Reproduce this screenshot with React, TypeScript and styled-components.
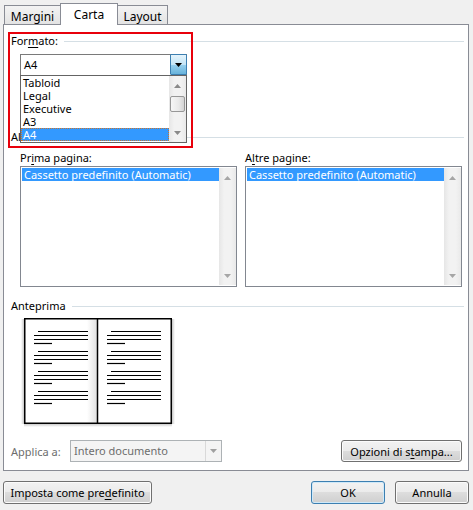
import React from 'react'
import styled, { createGlobalStyle } from 'styled-components'

const GlobalStyle = createGlobalStyle`
  html, body {
    margin: 0;
    padding: 0;
    background: #f0f0f0;
  }
  body {
    font-family: 'Segoe UI', 'Noto Sans', sans-serif;
    font-size: 11px;
    color: #000;
  }
`

const ArrowUp: React.FC<{ color?: string }> = ({ color = '#a6a6a6' }) => (
  <svg width="7" height="4" viewBox="0 0 7 4">
    <path d="M0 4 L3.5 0 L7 4 Z" fill={color} />
  </svg>
)

const ArrowDown: React.FC<{ color?: string }> = ({ color = '#a6a6a6' }) => (
  <svg width="7" height="4" viewBox="0 0 7 4">
    <path d="M0 0 L7 0 L3.5 4 Z" fill={color} />
  </svg>
)

const BookPreview: React.FC = () => {
  const paragraphs = [13, 33, 53, 73]
  const page = (x: number) =>
    paragraphs.map((y) => (
      <g key={`${x}-${y}`} stroke="#000" strokeWidth="1.2">
        <line x1={x + 14} y1={y + 0.5} x2={x + 64} y2={y + 0.5} />
        <line x1={x + 10} y1={y + 4.5} x2={x + 64} y2={y + 4.5} />
        <line x1={x + 10} y1={y + 8.5} x2={x + 64} y2={y + 8.5} />
        <line x1={x + 10} y1={y + 12.5} x2={x + 28} y2={y + 12.5} />
      </g>
    ))

  return (
    <svg width="154" height="110" viewBox="0 0 154 110">
      <defs>
        <linearGradient id="shL" x1="1" x2="0" y1="0" y2="0">
          <stop offset="0" stopColor="#000" stopOpacity="0.22" />
          <stop offset="1" stopColor="#000" stopOpacity="0" />
        </linearGradient>
        <linearGradient id="shR" x1="0" x2="1" y1="0" y2="0">
          <stop offset="0" stopColor="#000" stopOpacity="0.22" />
          <stop offset="1" stopColor="#000" stopOpacity="0" />
        </linearGradient>
        <linearGradient id="shB" x1="0" x2="0" y1="0" y2="1">
          <stop offset="0" stopColor="#000" stopOpacity="0.2" />
          <stop offset="1" stopColor="#000" stopOpacity="0" />
        </linearGradient>
        <linearGradient id="spine" x1="0" x2="1" y1="0" y2="0">
          <stop offset="0" stopColor="#000" stopOpacity="0" />
          <stop offset="1" stopColor="#000" stopOpacity="0.12" />
        </linearGradient>
      </defs>
      <rect x="0" y="1" width="3" height="105" fill="url(#shL)" />
      <rect x="151" y="1" width="3" height="105" fill="url(#shR)" />
      <rect x="3" y="106" width="148" height="3" fill="url(#shB)" />
      <rect x="3.75" y="0.75" width="146.5" height="104.5" fill="#fff" stroke="#000" strokeWidth="1.5" />
      <rect x="66" y="1.5" width="10" height="103" fill="url(#spine)" />
      <line x1="76.5" y1="0" x2="76.5" y2="106" stroke="#000" strokeWidth="1.5" />
      {page(3)}
      {page(76)}
    </svg>
  )
}

const Dialog = styled.div`
  width: 473px;
  height: 510px;
  box-sizing: border-box;
  padding: 3px 4px 0 3px;
  display: flex;
  flex-direction: column;
`

const TabStrip = styled.div`
  position: relative;
  z-index: 2;
  display: flex;
  align-items: flex-end;
  height: 21px;
  padding-left: 2px;
`

const Tab = styled.div<{ $active?: boolean; $w: number }>`
  width: ${(p) => p.$w}px;
  height: ${(p) => (p.$active ? 22 : 19)}px;
  margin-bottom: ${(p) => (p.$active ? -1 : 0)}px;
  margin-left: -1px;
  box-sizing: border-box;
  border: 1px solid #898c95;
  border-bottom: none;
  background: ${(p) => (p.$active ? '#fff' : 'linear-gradient(#f3f3f3, #e3e3e3)')};
  position: relative;
  z-index: ${(p) => (p.$active ? 2 : 1)};
  display: flex;
  align-items: center;
  justify-content: center;
  padding-top: ${(p) => (p.$active ? 0 : 2)}px;
  font-size: 12px;
  line-height: 15px;
`

const Panel = styled.div`
  position: relative;
  height: 447px;
  box-sizing: border-box;
  border: 1px solid #898c95;
  background: #fff;
  padding: 9px 4px 0 7px;
  display: flex;
  flex-direction: column;
`

const GroupHeader = styled.div<{ $top?: number }>`
  display: flex;
  align-items: center;
  height: 14px;
  line-height: 14px;
  margin-top: ${(p) => p.$top ?? 0}px;
  white-space: nowrap;
`

const Rule = styled.div`
  flex: 1;
  height: 1px;
  background: #d5dfe5;
  margin-left: 6px;
`

const Key = styled.span`
  text-decoration: underline;
  text-underline-offset: 2px;
`

const Combo = styled.div<{ $w: number; $disabled?: boolean }>`
  position: relative;
  width: ${(p) => p.$w}px;
  height: 22px;
  box-sizing: border-box;
  border: 1px solid ${(p) => (p.$disabled ? '#adb2b5' : '#7a7a7a')};
  background: ${(p) => (p.$disabled ? '#f4f4f4' : '#fff')};
  color: ${(p) => (p.$disabled ? '#6d6d6d' : '#000')};
  display: flex;
  align-items: center;
`

const ComboText = styled.div`
  flex: 1;
  padding-left: 3px;
  line-height: 20px;
`

const ComboButton = styled.div`
  width: 17px;
  height: 21px;
  margin: -1px -1px 0 0;
  box-sizing: border-box;
  border: 1px solid #3c7fb1;
  border-radius: 1px;
  background: linear-gradient(#e5f4fc 0%, #c4e5f6 50%, #98d1ef 51%, #68b3db 100%);
  display: flex;
  align-items: center;
  justify-content: center;
`

const ComboGhostButton = styled.div`
  width: 15px;
  height: 20px;
  border-left: 1px solid #d9d9d9;
  display: flex;
  align-items: center;
  justify-content: center;
`

const FormatCombo = styled(Combo)`
  margin: 6px 0 0 9px;
`

const DropList = styled.div`
  position: absolute;
  z-index: 5;
  top: 20px;
  left: -1px;
  width: 167px;
  height: 68px;
  box-sizing: border-box;
  border: 1px solid #646464;
  background: #fff;
  display: flex;
`

const Items = styled.div`
  flex: 1;
  display: flex;
  flex-direction: column;
`

const Item = styled.div<{ $selected?: boolean; $focus?: boolean }>`
  height: 13px;
  line-height: 13px;
  padding-left: 2px;
  white-space: nowrap;
  box-sizing: border-box;
  background: ${(p) => (p.$selected ? '#3399ff' : 'transparent')};
  color: ${(p) => (p.$selected ? '#fff' : '#000')};
  outline: ${(p) => (p.$focus ? '1px dotted #c8742e' : 'none')};
  outline-offset: -1px;
`

const ScrollBar = styled.div`
  width: 17px;
  flex: none;
  background: linear-gradient(90deg, #e6e6e6, #f2f2f2 30%, #f2f2f2 70%, #e9e9e9);
  display: flex;
  flex-direction: column;
  align-items: center;
`

const ScrollArrow = styled.div`
  height: 19px;
  width: 100%;
  display: flex;
  align-items: center;
  justify-content: center;
`

const ScrollSpace = styled.div`
  flex: 1;
  width: 100%;
  display: flex;
  justify-content: center;
`

const Thumb = styled.div`
  width: 15px;
  height: 16px;
  margin-top: 1px;
  box-sizing: border-box;
  border: 1px solid #979797;
  border-radius: 2px;
  background: linear-gradient(90deg, #f7f7f7, #e9e9e9 60%, #d4d4d4);
`

const SourceGrid = styled.div`
  display: grid;
  grid-template-columns: 217px 217px;
  column-gap: 8px;
  margin: 6px 0 0 9px;
`

const Field = styled.div`
  display: flex;
  flex-direction: column;
`

const FieldLabel = styled.div`
  height: 15px;
  line-height: 15px;
  margin-bottom: 1px;
`

const ListBox = styled.div`
  height: 121px;
  box-sizing: border-box;
  border: 1px solid #828790;
  background: #fff;
  display: flex;
  padding: 1px 0 1px 1px;
`

const PreviewBox = styled.div`
  margin: 5px 0 0 10px;
  height: 110px;
`

const ApplyRow = styled.div`
  display: flex;
  align-items: center;
  margin-top: 12px;
`

const ApplyLabel = styled.div`
  width: 59px;
  color: #6d6d6d;
`

const Button = styled.button<{ $w: number; $default?: boolean }>`
  width: ${(p) => p.$w}px;
  height: 23px;
  box-sizing: border-box;
  padding: 0;
  font: inherit;
  color: #000;
  border: 1px solid ${(p) => (p.$default ? '#3c7fb1' : '#707070')};
  border-radius: 3px;
  background: linear-gradient(#f2f2f2 0%, #ebebeb 49%, #dddddd 50%, #cfcfcf 100%);
  box-shadow: inset 0 0 0 1px ${(p) => (p.$default ? '#cfe9f9' : '#fbfbfb')};
`

const PrintButton = styled(Button)`
  margin: 0 2px 0 auto;
  height: 22px;
`

const RedFrame = styled.div`
  position: absolute;
  z-index: 6;
  left: 4px;
  top: 7px;
  width: 185px;
  height: 116px;
  box-sizing: border-box;
  border: 2px solid #e8000b;
  pointer-events: none;
`

const Footer = styled.div`
  display: flex;
  margin-top: 10px;
  gap: 10px;
`

const Spacer = styled.div`
  flex: 1;
`

const formats = ['Tabloid', 'Legal', 'Executive', 'A3', 'A4']

const SourceList: React.FC = () => (
  <ListBox>
    <Items>
      <Item $selected>Cassetto predefinito (Automatic)</Item>
    </Items>
    <ScrollBar>
      <ScrollArrow>
        <ArrowUp />
      </ScrollArrow>
      <ScrollSpace />
      <ScrollArrow>
        <ArrowDown />
      </ScrollArrow>
    </ScrollBar>
  </ListBox>
)

export default function App() {
  return (
    <>
      <GlobalStyle />
      <Dialog>
        <TabStrip>
          <Tab $w={57}>Margini</Tab>
          <Tab $w={58} $active>
            Carta
          </Tab>
          <Tab $w={51}>Layout</Tab>
        </TabStrip>

        <Panel>
          <GroupHeader>
            <span>
              For<Key>m</Key>ato:
            </span>
            <Rule />
          </GroupHeader>
          <FormatCombo $w={167}>
            <ComboText>A4</ComboText>
            <ComboButton>
              <ArrowDown color="#000" />
            </ComboButton>
            <DropList>
              <Items>
                {formats.map((f) => (
                  <Item key={f} $selected={f === 'A4'} $focus={f === 'A4'}>
                    {f}
                  </Item>
                ))}
              </Items>
              <ScrollBar>
                <ScrollArrow>
                  <ArrowUp color="#8a8a8a" />
                </ScrollArrow>
                <ScrollSpace>
                  <Thumb />
                </ScrollSpace>
                <ScrollArrow>
                  <ArrowDown color="#8a8a8a" />
                </ScrollArrow>
              </ScrollBar>
            </DropList>
          </FormatCombo>

          <GroupHeader $top={54}>
            <span>Alimentazione carta</span>
            <Rule />
          </GroupHeader>
          <SourceGrid>
            <Field>
              <FieldLabel>
                Pr<Key>i</Key>ma pagina:
              </FieldLabel>
              <SourceList />
            </Field>
            <Field>
              <FieldLabel>
                A<Key>l</Key>tre pagine:
              </FieldLabel>
              <SourceList />
            </Field>
          </SourceGrid>

          <GroupHeader $top={12}>
            <span>Anteprima</span>
            <Rule />
          </GroupHeader>
          <PreviewBox>
            <BookPreview />
          </PreviewBox>

          <ApplyRow>
            <ApplyLabel>Applica a:</ApplyLabel>
            <Combo $w={152} $disabled>
              <ComboText>Intero documento</ComboText>
              <ComboGhostButton>
                <ArrowDown color="#a0a0a0" />
              </ComboGhostButton>
            </Combo>
            <PrintButton $w={121}>
              Opzioni di s<Key>t</Key>ampa...
            </PrintButton>
          </ApplyRow>

          <RedFrame />
        </Panel>

        <Footer>
          <Button $w={149}>
            Imposta come pre<Key>d</Key>efinito
          </Button>
          <Spacer />
          <Button $w={74} $default>
            OK
          </Button>
          <Button $w={74}>Annulla</Button>
        </Footer>
      </Dialog>
    </>
  )
}
